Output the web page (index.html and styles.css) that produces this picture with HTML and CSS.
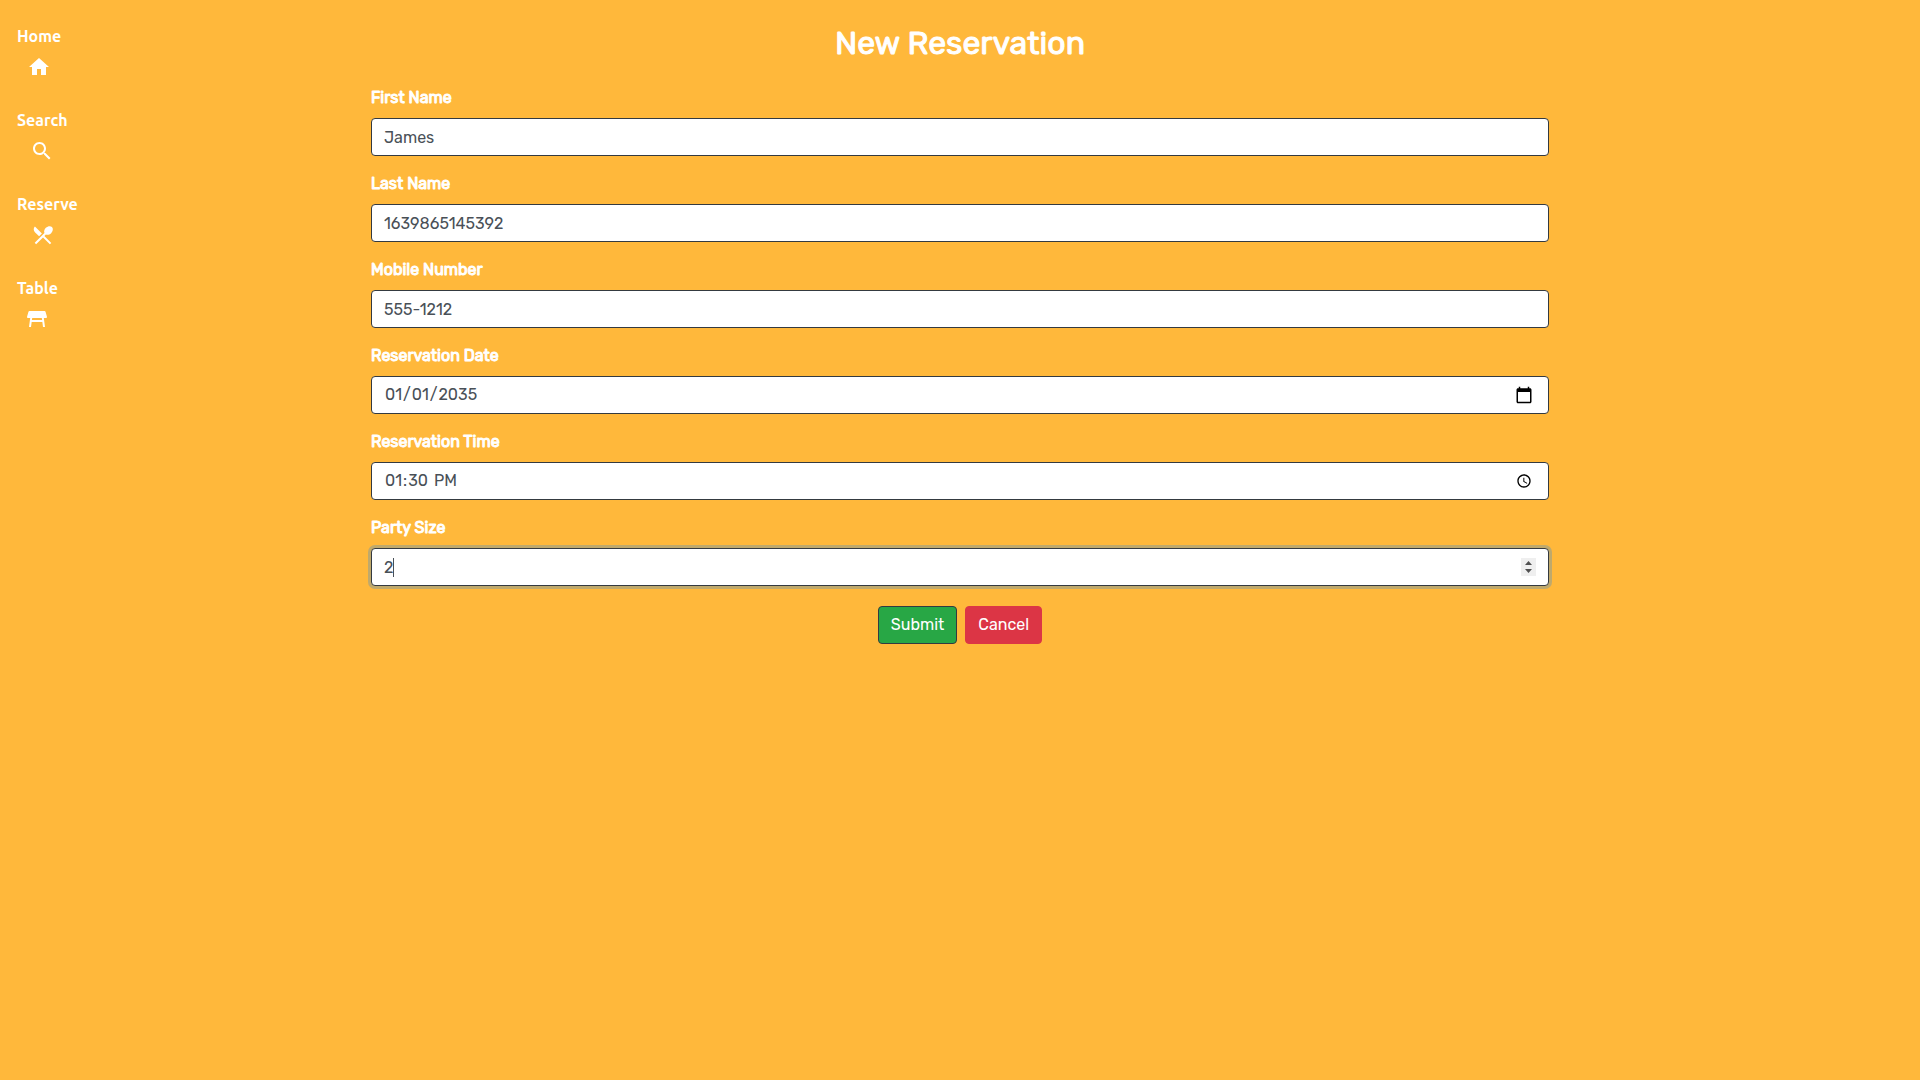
FILE: index.html
```html
<!DOCTYPE html>
<html lang="en">
<head>
<meta charset="utf-8">
<meta name="viewport" content="width=device-width, initial-scale=1">
<title>New Reservation</title>
<link rel="stylesheet" href="styles.css">
</head>
<body>
<div class="layout">
  <nav class="menu" aria-label="Main">
    <a class="menu-item" href="#home">
      <span class="menu-text">Home</span>
      <svg class="icon" viewBox="0 0 24 24" aria-hidden="true"><path d="M10 20v-6h4v6h5v-8h3L12 3 2 12h3v8z"/></svg>
    </a>
    <a class="menu-item" href="#search">
      <span class="menu-text">Search</span>
      <svg class="icon" viewBox="0 0 24 24" aria-hidden="true"><path d="M15.5 14h-.79l-.28-.27C15.41 12.59 16 11.11 16 9.5 16 5.91 13.09 3 9.5 3S3 5.91 3 9.5 5.91 16 9.5 16c1.61 0 3.09-.59 4.23-1.57l.27.28v.79l5 4.99L20.49 19l-4.99-5zm-6 0C7.01 14 5 11.99 5 9.5S7.01 5 9.5 5 14 7.01 14 9.5 11.99 14 9.5 14z"/></svg>
    </a>
    <a class="menu-item" href="#reserve">
      <span class="menu-text">Reserve</span>
      <svg class="icon" viewBox="0 0 24 24" aria-hidden="true"><path d="M8.1 13.34l2.83-2.83L3.91 3.5c-1.56 1.56-1.56 4.09 0 5.66l4.19 4.18zm6.78-1.81c1.53.71 3.68.21 5.27-1.38 1.91-1.91 2.28-4.65.81-6.12-1.46-1.46-4.2-1.1-6.12.81-1.59 1.59-2.09 3.74-1.38 5.27L3.7 19.87l1.41 1.41L12 14.41l6.88 6.88 1.41-1.41L13.41 13l1.47-1.47z"/></svg>
    </a>
    <a class="menu-item" href="#table">
      <span class="menu-text">Table</span>
      <svg class="icon" viewBox="0 0 24 24" aria-hidden="true"><path d="M21.96 9.73l-1.43-5C20.41 4.3 20.02 4 19.57 4H4.43c-.45 0-.84.3-.96.73l-1.43 5c-.18.63.3 1.27.96 1.27h2.2L4 20h2l.67-5h10.67l.66 5h2l-1.2-9H21c.66 0 1.14-.64.96-1.27zM6.93 13l.27-2h9.6l.27 2H6.93z"/></svg>
    </a>
  </nav>
  <main class="content">
    <h1 class="title">New Reservation</h1>
    <form class="form">
      <div class="field">
        <label for="first_name">First Name</label>
        <input class="control" id="first_name" type="text" value="James">
      </div>
      <div class="field">
        <label for="last_name">Last Name</label>
        <input class="control" id="last_name" type="text" value="1639865145392">
      </div>
      <div class="field">
        <label for="mobile_number">Mobile Number</label>
        <input class="control" id="mobile_number" type="tel" value="555-1212">
      </div>
      <div class="field">
        <label for="reservation_date">Reservation Date</label>
        <input class="control" id="reservation_date" type="date" value="2035-01-01">
      </div>
      <div class="field">
        <label for="reservation_time">Reservation Time</label>
        <input class="control" id="reservation_time" type="time" value="13:30">
      </div>
      <div class="field field-active">
        <label for="people">Party Size</label>
        <input class="control" id="people" type="number" min="1" value="2" autofocus>
      </div>
      <div class="actions">
        <button class="button button-submit" type="submit">Submit</button>
        <button class="button button-cancel" type="button">Cancel</button>
      </div>
    </form>
  </main>
</div>
</body>
</html>
```
FILE: styles.css
```css
*, *::before, *::after {
  box-sizing: border-box;
}

body {
  margin: 0;
  min-height: 100vh;
  background: #ffb83b;
  color: #fff;
  font-family: Rubik, Roboto, sans-serif;
  font-size: 16px;
  line-height: 24px;
}

.layout {
  display: grid;
  grid-template-columns: 1fr calc(60% + 26px) 1fr;
}

.menu {
  display: flex;
  flex-direction: column;
  align-items: flex-start;
  gap: 29px;
  padding: 24px 17px;
  font-family: Ubuntu, "Noto Sans", sans-serif;
  font-weight: 700;
}

.menu-item {
  display: flex;
  flex-direction: column;
  align-items: center;
  gap: 7px;
  max-width: 52px;
  color: inherit;
  text-decoration: none;
}

.menu-text {
  align-self: flex-start;
  white-space: nowrap;
}

.icon {
  width: 24px;
  height: 24px;
  fill: currentColor;
}

.content {
  padding-top: 24px;
}

.title {
  margin: 0 0 24px;
  font-size: 32px;
  font-weight: 400;
  line-height: 38px;
  text-align: center;
  -webkit-text-stroke: 1px currentColor;
}

.form {
  display: flex;
  flex-direction: column;
  gap: 16px;
}

.field {
  display: flex;
  flex-direction: column;
  gap: 8px;
}

.field label {
  -webkit-text-stroke: 1px currentColor;
}

.control {
  width: 100%;
  height: 38px;
  padding: 6px 12px;
  border: 1px solid #343a40;
  border-radius: 4px;
  background: #fff;
  color: #495057;
  font: inherit;
}

.control:focus {
  outline: 0;
  box-shadow: 0 0 0 3px rgba(0, 123, 255, 0.25);
  caret-color: transparent;
}

.control[type="date"]::-webkit-calendar-picker-indicator {
  width: 20px;
  height: 20px;
  background: url("data:image/svg+xml,%3Csvg xmlns='http://www.w3.org/2000/svg' viewBox='0 0 24 24'%3E%3Cpath d='M20 3h-1V1h-2v2H7V1H5v2H4c-1.100 0-2 .9-2 2v16c0 1.100.9 2 2 2h16c1.100 0 2-.9 2-2V5c0-1.100-.9-2-2-2zm0 18H4V8h16v13z'/%3E%3C/svg%3E") center / 18px 18px no-repeat;
}

.control::-webkit-datetime-edit-ampm-field {
  margin-left: 2px;
}

.control::-webkit-inner-spin-button {
  width: 15px;
  height: 18px;
  appearance: none;
  opacity: 1;
  background: #efefef url("data:image/svg+xml,%3Csvg xmlns='http://www.w3.org/2000/svg' viewBox='0 0 15 18' fill='%23505050'%3E%3Cpath d='M4 7l3.500-4L11 7zM4 11h7l-3.500 4z'/%3E%3C/svg%3E") center / 15px 18px no-repeat;
}

/* Steady text cursor in the active field */
.field-active {
  position: relative;
}

.field-active::after {
  content: "";
  position: absolute;
  bottom: 9px;
  left: 22px;
  width: 1px;
  height: 19px;
  background: #495057;
}

.actions {
  display: flex;
  justify-content: center;
  gap: 8px;
  padding-top: 4px;
}

.button {
  padding: 6px 12px;
  border: 1px solid #dc3545;
  border-radius: 4px;
  color: #fff;
  font: inherit;
}

.button-submit {
  border-color: #343a40;
  background: #28a745;
}

.button-cancel {
  background: #dc3545;
}
```
